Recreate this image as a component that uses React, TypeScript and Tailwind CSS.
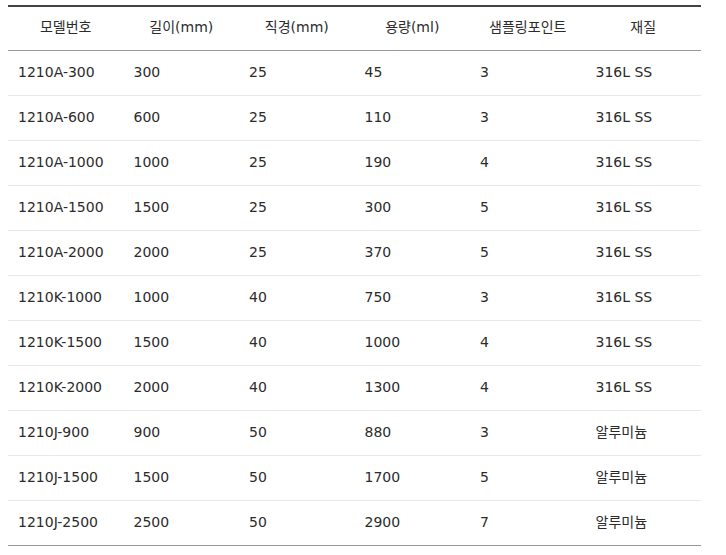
const headers = ['모델번호', '길이(mm)', '직경(mm)', '용량(ml)', '샘플링포인트', '재질'];

const rows: string[][] = [
  ['1210A-300', '300', '25', '45', '3', '316L SS'],
  ['1210A-600', '600', '25', '110', '3', '316L SS'],
  ['1210A-1000', '1000', '25', '190', '4', '316L SS'],
  ['1210A-1500', '1500', '25', '300', '5', '316L SS'],
  ['1210A-2000', '2000', '25', '370', '5', '316L SS'],
  ['1210K-1000', '1000', '40', '750', '3', '316L SS'],
  ['1210K-1500', '1500', '40', '1000', '4', '316L SS'],
  ['1210K-2000', '2000', '40', '1300', '4', '316L SS'],
  ['1210J-900', '900', '50', '880', '3', '알루미늄'],
  ['1210J-1500', '1500', '50', '1700', '5', '알루미늄'],
  ['1210J-2500', '2500', '50', '2900', '7', '알루미늄'],
];

export default function App() {
  return (
    <div className="bg-white pt-[5px] pl-[8px] w-[726px] h-[555px] font-['DejaVu_Sans','Noto_Sans_CJK_KR',sans-serif] text-[#2b2b2b]">
      <table className="w-[693px] table-fixed border-collapse border-t-2 border-b border-t-[#444] border-b-[#999] text-[14px]">
        <thead>
          <tr className="h-[44px] border-b border-[#999]">
            {headers.map((h) => (
              <th key={h} className="font-normal text-center align-middle pb-[2px]">
                {h}
              </th>
            ))}
          </tr>
        </thead>
        <tbody>
          {rows.map((row, i) => (
            <tr key={row[0]} className={`h-[45px] ${i < rows.length - 1 ? 'border-b border-[#e8e8e8]' : ''}`}>
              {row.map((cell, j) => (
                <td key={j} className="pl-[10px] align-middle">
                  {cell}
                </td>
              ))}
            </tr>
          ))}
        </tbody>
      </table>
    </div>
  );
}
